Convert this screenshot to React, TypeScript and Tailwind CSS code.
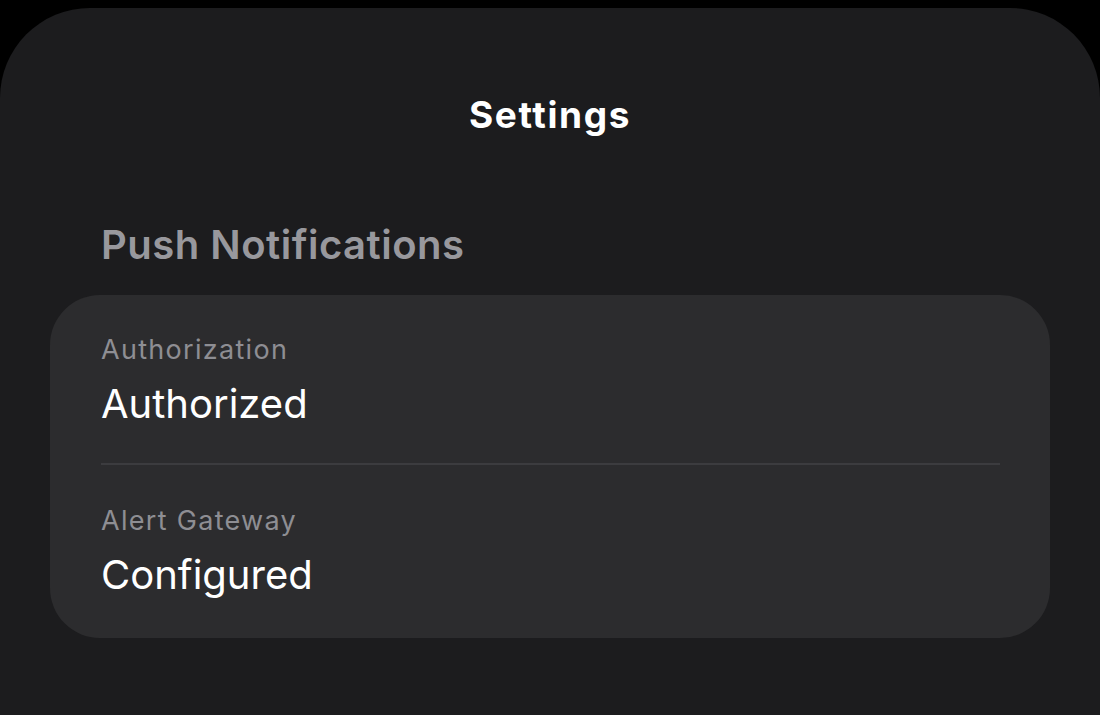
import React from "react";

export default function App() {
  const font = { fontFamily: "Inter, 'Noto Sans', sans-serif" };
  return (
    <div className="h-[715px] w-[1100px] bg-black pt-[8px] overflow-hidden" style={font}>
      <div className="h-[760px] w-[1100px] bg-[#1c1c1e] rounded-t-[90px] flex flex-col">
        <div className="pt-[82px] text-center text-white text-[37px] font-bold leading-[50px] tracking-[1.6px]">
          Settings
        </div>
        <div className="mt-[80px] pl-[101px] text-[#98989d] text-[40px] font-semibold leading-[50px] tracking-[0.5px]">
          Push Notifications
        </div>
        <div className="mt-[25px] mx-[50px] bg-[#2c2c2e] rounded-[50px] pl-[51px] pr-[50px] pt-[38px] pb-[39px]">
          <div className="pb-[35px]">
            <div className="text-[#8e8e93] text-[27px] leading-[34px] tracking-[1.3px]">Authorization</div>
            <div className="mt-[13px] text-white text-[40px] leading-[48px] tracking-[0px]">Authorized</div>
          </div>
          <div className="h-[2px] bg-[#3c3c3f]" />
          <div className="pt-[39px]">
            <div className="text-[#8e8e93] text-[27px] leading-[34px] tracking-[1.3px]">Alert Gateway</div>
            <div className="mt-[13px] text-white text-[40px] leading-[48px] tracking-[0px]">Configured</div>
          </div>
        </div>
      </div>
    </div>
  );
}
